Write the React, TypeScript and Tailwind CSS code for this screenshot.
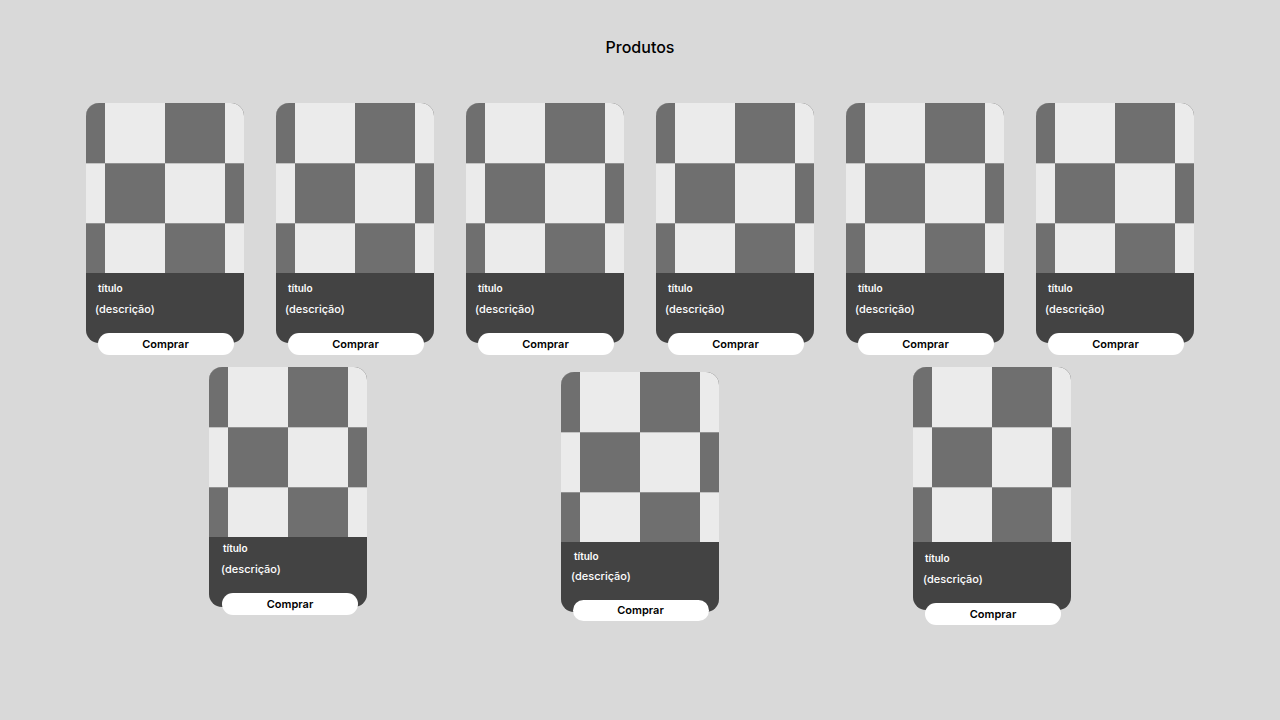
import React from "react";

type CardProps = {
  imgH?: number;
  panelH?: string;
  btnMt: string;
  wrapMt?: string;
  titlePt: string;
  titlePl: string;
  descPl: string;
  descMt: string;
  btnShift?: string;
  btnH?: string;
};

function Checker({ h }: { h: number }) {
  const cols = [-41, 19, 79, 139];
  const rows = [0, 60, 120, 180];
  return (
    <svg width={158} height={h} viewBox={`0 0 158 ${h}`} className="block">
      <rect width={158} height={h} fill="#ebebeb" />
      {rows.map((y, ri) =>
        cols.map((x, ci) =>
          (ri + ci) % 2 === 0 ? (
            <rect key={`${ri}-${ci}`} x={x} y={y} width={60} height={60} fill="#6f6f6f" />
          ) : null
        )
      )}
      {rows.slice(1).map((y) => (
        <rect key={`l${y}`} x={0} y={y} width={158} height={0.6} fill="#a8a8a8" />
      ))}
    </svg>
  );
}

function Card(p: CardProps) {
  return (
    <div className={`flex flex-col items-center ${p.wrapMt ?? ""}`}>
      <div className="w-[158px] rounded-[13px] overflow-hidden bg-[#434343]">
        <Checker h={p.imgH ?? 170} />
        <div className={`${p.panelH ?? "h-[70px]"} flex flex-col ${p.titlePt}`}>
          <span className={`text-[10px] leading-[12px] font-semibold text-white ${p.titlePl}`}>título</span>
          <span className={`text-[11px] leading-[14px] font-medium text-white ${p.descPl} ${p.descMt}`}>(descrição)</span>
        </div>
      </div>
      <button
        className={`relative w-[136px] ${p.btnH ?? "h-[22px]"} ${p.btnMt} ${p.btnShift ?? ""} rounded-full bg-white text-[11px] font-semibold text-black leading-none`}
      >
        Comprar
      </button>
    </div>
  );
}

export default function App() {
  const row1 = Array.from({ length: 6 });
  return (
    <div
      className="w-[1280px] h-[720px] bg-[#d9d9d9] flex flex-col items-center"
      style={{ fontFamily: "Inter, 'Noto Sans', sans-serif" }}
    >
      <h1 className="pt-[35px] text-[16px] leading-6 font-medium text-black">Produtos</h1>
      <div className="mt-[44px] flex gap-8 justify-center">
        {row1.map((_, i) => (
          <Card
            key={i}
            btnMt="-mt-[10px]"
            btnShift="ml-[1px]"
            titlePt="pt-[9px]"
            titlePl="pl-3"
            descPl="pl-[9px]"
            descMt="mt-[8px]"
          />
        ))}
      </div>
      <div className="mt-3 flex gap-[194px] justify-center items-start">
        <Card
          btnMt="-mt-[14px]"
          btnShift="ml-[4px]"
          titlePt="pt-[5px]"
          titlePl="pl-[14px]"
          descPl="pl-3"
          descMt="mt-[8px]"
        />
        <Card
          wrapMt="mt-[5px]"
          btnMt="-mt-[12px]"
          btnH="h-[21px]"
          btnShift="ml-[1px]"
          titlePt="pt-[8px]"
          titlePl="pl-[13px]"
          descPl="pl-[10px]"
          descMt="mt-[7px]"
        />
        <Card
          imgH={175}
          panelH="h-[68px]"
          btnMt="-mt-[7px]"
          btnShift="ml-[2px]"
          titlePt="pt-[10px]"
          titlePl="pl-3"
          descPl="pl-[10px]"
          descMt="mt-[8px]"
        />
      </div>
    </div>
  );
}
